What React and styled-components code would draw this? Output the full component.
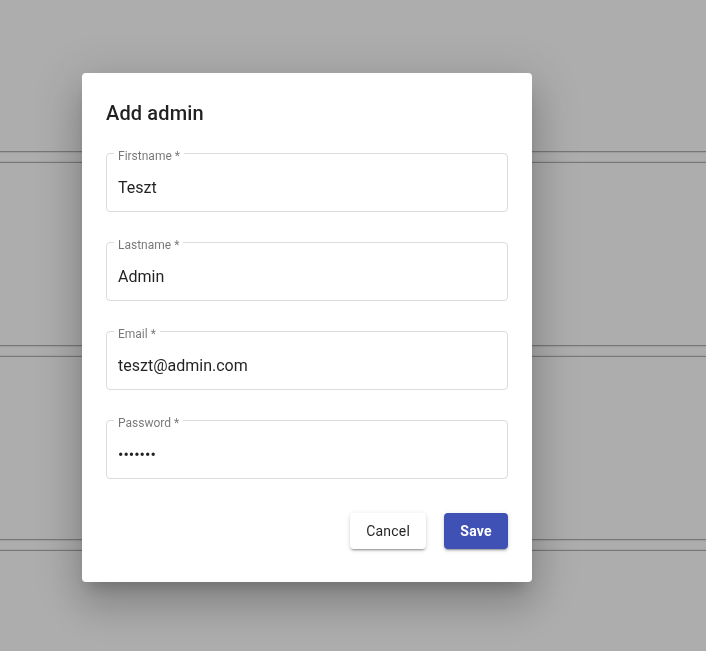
import React from "react";
import styled, { createGlobalStyle } from "styled-components";

const GlobalStyle = createGlobalStyle`
  html, body {
    margin: 0;
    padding: 0;
    height: 100%;
    overflow: hidden;
  }
  body {
    font-family: Roboto, "Liberation Sans", Arial, sans-serif;
    background: #adadad;
  }
`;

const Page = styled.div`
  display: flex;
  flex-direction: column;
  gap: 10px;
  margin-top: -32px;
  height: calc(100vh + 32px);
  overflow: hidden;
  background: #adadad;
`;

const Panel = styled.div`
  flex: 0 0 184px;
  box-sizing: border-box;
  border-top: 1px solid #777;
  border-bottom: 1px solid #777;
  box-shadow: 0 1px 1px rgba(0, 0, 0, 0.08), 0 -1px 1px rgba(0, 0, 0, 0.05);
`;

const Overlay = styled.div`
  position: fixed;
  inset: 0;
  padding: 73px 0 0 82px;
  display: flex;
  align-items: flex-start;
`;

const Dialog = styled.div`
  width: 450px;
  box-sizing: border-box;
  padding: 24px 24px 33px;
  background: #fff;
  border-radius: 4px;
  box-shadow: 0px 11px 15px -7px rgba(0, 0, 0, 0.2),
    0px 24px 38px 3px rgba(0, 0, 0, 0.14), 0px 9px 46px 8px rgba(0, 0, 0, 0.12);
`;

const Title = styled.h2`
  margin: 0 0 24px;
  font-size: 20px;
  line-height: 32px;
  font-weight: 500;
  letter-spacing: 0.15px;
  color: rgba(0, 0, 0, 0.87);
`;

const Form = styled.form`
  display: flex;
  flex-direction: column;
  gap: 30px;
`;

const FieldBox = styled.div`
  position: relative;
  height: 59px;
  box-sizing: border-box;
  padding: 22px 11px 0;
  border: 1px solid #dcdcdc;
  border-radius: 4px;
`;

const Label = styled.label`
  position: absolute;
  top: -4px;
  left: 7px;
  padding: 0 4px;
  background: #fff;
  font-size: 12px;
  line-height: 12px;
  color: rgba(0, 0, 0, 0.54);
`;

const Input = styled.input`
  display: block;
  width: 100%;
  height: 23px;
  padding: 0;
  margin: 0;
  border: none;
  outline: none;
  background: transparent;
  font-family: Roboto, "Liberation Sans", Arial, sans-serif;
  font-size: 16px;
  line-height: 23px;
  color: rgba(0, 0, 0, 0.87);
`;

const Actions = styled.div`
  display: flex;
  justify-content: flex-end;
  gap: 18px;
  margin-top: 34px;
`;

const Button = styled.button`
  height: 36px;
  min-width: 64px;
  padding: 0 16px;
  border: none;
  border-radius: 4px;
  font-family: Roboto, "Liberation Sans", Arial, sans-serif;
  font-size: 14px;
  font-weight: ${(p) => (p.$primary ? 700 : 400)};
  letter-spacing: 0.2px;
  color: ${(p) => (p.$primary ? "#fff" : "rgba(0, 0, 0, 0.87)")};
  background: ${(p) => (p.$primary ? "#3f51b5" : "#fff")};
  box-shadow: 0px 3px 1px -2px rgba(0, 0, 0, 0.2),
    0px 2px 2px 0px rgba(0, 0, 0, 0.14), 0px 1px 5px 0px rgba(0, 0, 0, 0.12);
  cursor: pointer;
`;

const fields = [
  { name: "Firstname", value: "Teszt" },
  { name: "Lastname", value: "Admin" },
  { name: "Email", value: "teszt@admin.com" },
  { name: "Password", value: "teszt12", type: "password" },
];

const App = () => {
  return (
    <>
      <GlobalStyle />
      <Page>
        <Panel />
        <Panel />
        <Panel />
        <Panel />
      </Page>
      <Overlay>
        <Dialog>
          <Title>Add admin</Title>
          <Form onSubmit={(e) => e.preventDefault()}>
            {fields.map((f) => (
              <FieldBox key={f.name}>
                <Label>{f.name} *</Label>
                <Input type={f.type || "text"} defaultValue={f.value} />
              </FieldBox>
            ))}
          </Form>
          <Actions>
            <Button>Cancel</Button>
            <Button $primary>Save</Button>
          </Actions>
        </Dialog>
      </Overlay>
    </>
  );
};

export default App;
